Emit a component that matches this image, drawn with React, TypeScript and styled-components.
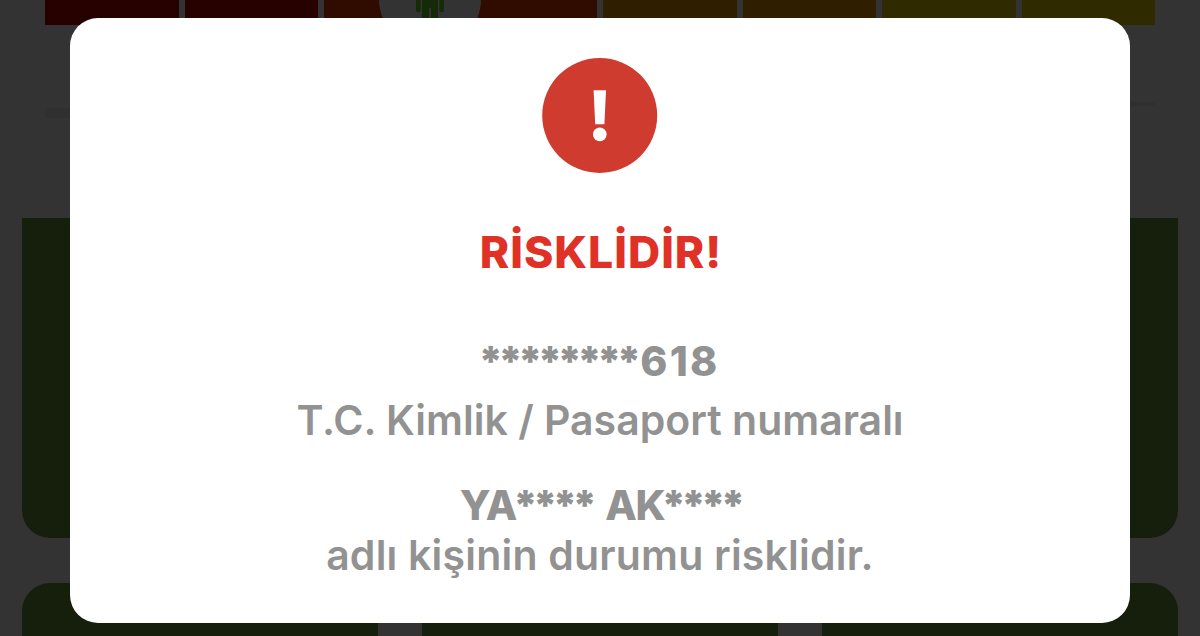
import React from 'react';
import styled, { createGlobalStyle } from 'styled-components';

const GlobalStyle = createGlobalStyle`
    body {
        margin: 0;
        background: #333333;
        font-family: Inter, "Liberation Sans", sans-serif;
        overflow: hidden;
    }
`

const Page = styled.div`
    position: relative;
    box-sizing: border-box;
    width: 1200px;
    height: 636px;
    overflow: hidden;
    background: #333333;
`

const Scale = styled.div`
    position: relative;
    display: grid;
    grid-template-columns: repeat(8, 1fr);
    column-gap: 6px;
    height: 25px;
    margin: 0 45px;
`

const ScaleStep = styled.div<{ $color: string }>`
    background: ${({ $color }) => $color};
`

const Marker = styled.div`
    position: absolute;
    left: 334px;
    top: -52px;
    display: flex;
    justify-content: center;
    width: 102px;
    height: 102px;
    border-radius: 50%;
    background: #333333;
`

const Divider = styled.div`
    display: flex;
    justify-content: space-between;
    height: 12px;
    margin: 77px 45px 0;
`

const DividerEnd = styled.div<{ $top?: number; $height: number }>`
    width: 40px;
    height: ${({ $height }) => $height}px;
    margin-top: ${({ $top = 0 }) => $top}px;
    background: #303030;
`

const Panel = styled.div`
    height: 320px;
    margin: 104px 22px 45px;
    border-radius: 0 0 28px 28px;
    background: #151f0b;
`

const Tiles = styled.div`
    display: grid;
    grid-template-columns: repeat(3, 1fr);
    column-gap: 44px;
    margin: 0 22px;
`

const Tile = styled.div`
    height: 120px;
    border-radius: 28px;
    background: #151f0b;
`

const Modal = styled.div`
    position: absolute;
    left: 70px;
    top: 18px;
    box-sizing: border-box;
    display: flex;
    flex-direction: column;
    align-items: center;
    width: 1060px;
    height: 605px;
    padding-top: 40px;
    border-radius: 28px;
    background: #ffffff;
`

const Title = styled.h1`
    margin: 54px 0 59px;
    padding-left: 2px;
    color: #e03127;
    font-size: 44.5px;
    font-weight: 800;
    line-height: 50px;
    letter-spacing: 1px;
    white-space: nowrap;
`

const Line = styled.p<{ $bold?: boolean; $gap?: number; $spacing?: number }>`
    margin: 0 0 ${({ $gap = 0 }) => $gap}px;
    color: #929292;
    font-size: 41px;
    font-weight: ${({ $bold }) => ($bold ? 800 : 600)};
    line-height: 50px;
    letter-spacing: ${({ $spacing = 0 }) => $spacing}px;
    white-space: pre;
`

const Stars = styled.span<{ $before?: number; $after?: number }>`
    margin-left: ${({ $before = 0 }) => $before}px;
    margin-right: ${({ $after = 0 }) => $after}px;
    font-weight: 900;
    letter-spacing: -5.2px;
`

const steps = ['#270000', '#270000', '#2f0b00', '#2f0b00', '#301e00', '#301e00', '#2f2a00', '#2f2a00'];

const AlertIcon: React.FC = () => (
    <svg width="116" height="115" viewBox="0 0 116 115">
        <circle cx="57.7" cy="57.5" r="57.5" fill="#cf3b2e" />
        <path d="M51.6 32.3h12.4l-1.6 34h-9.2z" fill="#ffffff" />
        <circle cx="57.8" cy="76.4" r="6.8" fill="#ffffff" />
    </svg>
);

const PersonIcon: React.FC = () => (
    <svg width="30" height="102" viewBox="0 0 30 102" fill="#152a06">
        <path d="M1 40h28v22a2.3 2.3 0 0 1-4.6 0V50h-1.4v20h-7V60h-2v10H7V50H5.6v12a2.3 2.3 0 0 1-4.6 0z" />
    </svg>
);

const App: React.FC = () => (
    <Page>
        <GlobalStyle />
        <Scale>
            {
                steps.map((color, index) => (
                    <ScaleStep key={index} $color={color} />
                ))
            }
            <Marker>
                <PersonIcon />
            </Marker>
        </Scale>
        <Divider>
            <DividerEnd $top={6} $height={10} />
            <DividerEnd $height={4} />
        </Divider>
        <Panel />
        <Tiles>
            <Tile />
            <Tile />
            <Tile />
        </Tiles>
        <Modal>
            <AlertIcon />
            <Title>RİSKLİDİR!</Title>
            <Line $bold $gap={9} $spacing={2.3}><Stars $before={-2} $after={4}>********</Stars>618</Line>
            <Line $gap={35}>T.C. Kimlik / Pasaport numaralı</Line>
            <Line $bold $spacing={-1.5}>YA<Stars $before={-3} $after={6}>****</Stars> AK<Stars $before={-3}>****</Stars></Line>
            <Line $spacing={0.2}>adlı kişinin durumu risklidir.</Line>
        </Modal>
    </Page>
);

export default App;
